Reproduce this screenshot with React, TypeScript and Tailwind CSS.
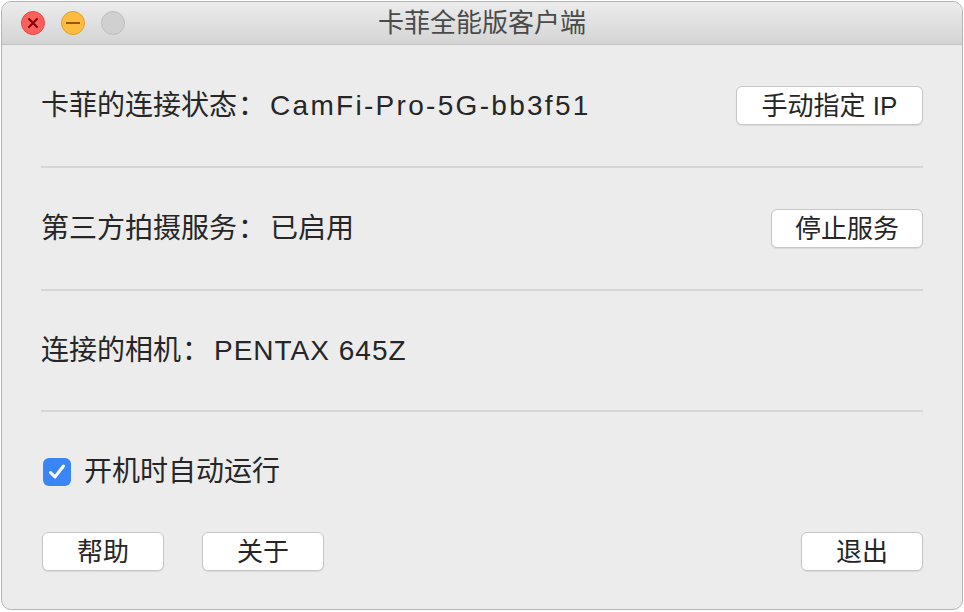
import React from 'react';

const FONT = { fontFamily: '"Liberation Sans", "Noto Sans CJK SC", sans-serif' };

const MacButton = ({ label, className = '' }: { label: string; className?: string }) => (
  <button
    className={`h-[39px] bg-white border border-[#c6c6c6] rounded-[6px] shadow-[0_1px_1px_rgba(0,0,0,0.08)] text-[26px] leading-none text-[#262626] flex items-center justify-center ${className}`}
  >
    {label}
  </button>
);

// 全角冒号，带一点右侧留白
const Colon = () => <span className="inline-block w-[33px] pr-[3px] text-center">：</span>;

const Divider = () => <div className="h-[2px] bg-[#d6d6d6]" />;

export default function App() {
  return (
    <div className="w-[964px] h-[612px] bg-white pt-px pl-px" style={FONT}>
      <div className="w-[962px] h-[609px] rounded-[10px] border border-[#b4b4b4] bg-[#ececec] overflow-hidden flex flex-col">
        {/* 标题栏 */}
        <div className="h-[43px] shrink-0 bg-gradient-to-b from-[#ececec] to-[#d4d4d4] border-b border-[#c2c2c2] flex items-center relative">
          <div className="flex items-center gap-[16px] pl-[19px]">
            <div className="w-[24px] h-[24px] rounded-full bg-[#fc605c] border border-[#de4a45] flex items-center justify-center">
              <svg width="12" height="12" viewBox="0 0 12 12">
                <path d="M2 2 L10 10 M10 2 L2 10" stroke="#7e0508" strokeWidth="2" strokeLinecap="round" />
              </svg>
            </div>
            <div className="w-[24px] h-[24px] rounded-full bg-[#fdbc40] border border-[#dea030] flex items-center justify-center">
              <div className="w-[14px] h-[2px] bg-[#985712]" />
            </div>
            <div className="w-[24px] h-[24px] rounded-full bg-[#d0d0d0] border border-[#bdbdbd]" />
          </div>
          <div className="absolute inset-0 flex items-center justify-center text-[26px] text-[#4a4a4a] pointer-events-none">
            卡菲全能版客户端
          </div>
        </div>

        {/* 内容区 */}
        <div className="flex-1 px-[39px] flex flex-col text-[28px] text-[#262626]">
          <div className="h-[121px] flex items-center justify-between">
            <span>
              卡菲的连接状态<Colon />
              <span className="tracking-[2.3px]">CamFi-Pro-5G-bb3f51</span>
            </span>
            <MacButton label="手动指定 IP" className="w-[187px]" />
          </div>
          <Divider />
          <div className="h-[121px] flex items-center justify-between">
            <span>
              第三方拍摄服务<Colon />已启用
            </span>
            <MacButton label="停止服务" className="w-[152px]" />
          </div>
          <Divider />
          <div className="h-[119px] flex items-center">
            <span>
              连接的相机<Colon />
              <span className="tracking-[1px]">PENTAX 645Z</span>
            </span>
          </div>
          <Divider />

          <div className="mt-[39px] flex items-center pl-[2px]">
            <div className="w-[28px] h-[28px] rounded-[6px] bg-[#3b86f7] flex items-center justify-center">
              <svg width="22" height="22" viewBox="0 0 22 22">
                <path d="M4.5 11.5 L9 16 L17.5 5" stroke="white" strokeWidth="3" fill="none" strokeLinecap="round" strokeLinejoin="round" />
              </svg>
            </div>
            <span className="ml-[13px]">开机时自动运行</span>
          </div>

          <div className="mt-[39px] flex items-center">
            <MacButton label="帮助" className="w-[122px] ml-px" />
            <MacButton label="关于" className="w-[122px] ml-[38px]" />
            <div className="flex-1" />
            <MacButton label="退出" className="w-[122px]" />
          </div>
        </div>
      </div>
    </div>
  );
}
